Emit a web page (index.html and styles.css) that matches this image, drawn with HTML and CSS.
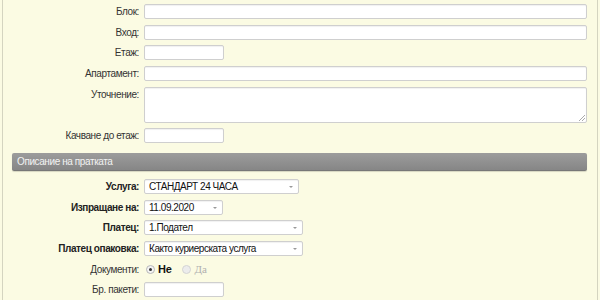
FILE: index.html
```html
<!DOCTYPE html>
<html lang="bg">
<head>
<meta charset="utf-8">
<title>Форма</title>
<link rel="stylesheet" href="styles.css">
</head>
<body>
<div class="panel">
  <div class="rows">
    <div class="row"><label class="lbl">Блок:</label><span class="inp full"></span></div>
    <div class="row"><label class="lbl">Вход:</label><span class="inp full"></span></div>
    <div class="row"><label class="lbl">Етаж:</label><span class="inp short"></span></div>
    <div class="row"><label class="lbl">Апартамент:</label><span class="inp full"></span></div>
    <div class="row"><label class="lbl">Уточнение:</label><span class="inp full area"><span class="grip"></span></span></div>
    <div class="row"><label class="lbl">Качване до етаж:</label><span class="inp short"></span></div>
  </div>

  <div class="section">Описание на пратката</div>

  <div class="rows">
    <div class="row"><label class="lbl b">Услуга:</label><span class="inp sel w155">СТАНДАРТ 24 ЧАСА<i class="arr"></i></span></div>
    <div class="row"><label class="lbl b">Изпращане на:</label><span class="inp sel w79">11.09.2020<i class="arr"></i></span></div>
    <div class="row"><label class="lbl b">Платец:</label><span class="inp sel w159">1.Подател<i class="arr"></i></span></div>
    <div class="row"><label class="lbl b">Платец опаковка:</label><span class="inp sel w159">Както куриерската услуга<i class="arr"></i></span></div>
    <div class="row"><label class="lbl">Документи:</label>
      <span class="radios">
        <span class="opt on"><span class="rb"></span>Не</span>
        <span class="opt off"><span class="rb"></span>Да</span>
      </span>
    </div>
    <div class="row"><label class="lbl">Бр. пакети:</label><span class="inp short"></span></div>
  </div>
</div>
</body>
</html>
```

FILE: styles.css
```css
html, body {
  margin: 0;
  padding: 0;
  background: #fbfbe3;
}
body {
  font-family: "Liberation Sans", Arial, sans-serif;
  font-size: 10px;
  color: #333;
}
.panel {
  margin-left: 2px;
  border-left: 1px solid #d4d4c0;
  border-right: 1px solid #d4d4c0;
  padding: 4px 10px 20px 9px;
  box-sizing: content-box;
  width: 575px;
  background: #fbfbe3;
}
.rows {
  display: flex;
  flex-direction: column;
  gap: 5.7px;
}
.row {
  display: flex;
  align-items: flex-start;
}
.lbl {
  width: 127px;
  margin-right: 5px;
  text-align: right;
  line-height: 15px;
  color: #333;
  flex: none;
  letter-spacing: -0.4px;
}
.lbl.b {
  font-weight: bold;
  color: #222;
}
.inp {
  display: block;
  box-sizing: border-box;
  height: 15px;
  background: #fff;
  border: 1px solid #cfcfcf;
  border-radius: 2px;
  box-shadow: inset 0 1px 1px rgba(0,0,0,0.06);
  position: relative;
}
.full { flex: 1; }
.short { width: 80px; }
.area { height: 36px; }
.grip {
  position: absolute;
  right: 1px;
  bottom: 1px;
  width: 6px;
  height: 6px;
  background: linear-gradient(135deg, transparent 0 45%, #aaa 45% 55%, transparent 55% 70%, #aaa 70% 80%, transparent 80%);
}
.sel {
  font-size: 10px;
  letter-spacing: -0.45px;
  line-height: 13px;
  padding-left: 4px;
  color: #111;
  white-space: nowrap;
}
.w155 { width: 155px; }
.w79 { width: 79px; }
.w159 { width: 159px; }
.arr {
  position: absolute;
  right: 5px;
  top: 6px;
  width: 0;
  height: 0;
  border-left: 2px solid transparent;
  border-right: 2px solid transparent;
  border-top: 2px solid #999;
}
.section {
  margin: 9.5px 0 8px 0;
  height: 18px;
  box-sizing: border-box;
  padding-left: 5px;
  line-height: 17px;
  color: #f2f2f2;
  font-size: 10px;
  letter-spacing: -0.4px;
  background: linear-gradient(#9c9c9c, #868686);
  border-bottom: 1px solid #777;
  border-radius: 2px;
  box-shadow: 0 1px 1px rgba(0,0,0,0.15);
}
.radios {
  display: flex;
  align-items: center;
  height: 15px;
  gap: 11px;
  padding-left: 2px;
}
.opt {
  display: flex;
  align-items: center;
  gap: 3px;
  font-size: 11px;
}
.rb {
  width: 9px;
  height: 9px;
  box-sizing: border-box;
  border-radius: 50%;
  border: 1px solid #b8b8b8;
  background: #f4f4f4;
  position: relative;
}
.opt.on {
  font-weight: bold;
  color: #111;
  letter-spacing: -0.3px;
}
.opt.on .rb::after {
  content: "";
  position: absolute;
  left: 2px;
  top: 2px;
  width: 3px;
  height: 3px;
  border-radius: 50%;
  background: #333;
}
.opt.off {
  color: #b0b0b0;
  font-family: "Liberation Serif", "Times New Roman", serif;
}
.opt.off .rb {
  border-color: #d4d4d4;
  background: #ececec;
}
```
